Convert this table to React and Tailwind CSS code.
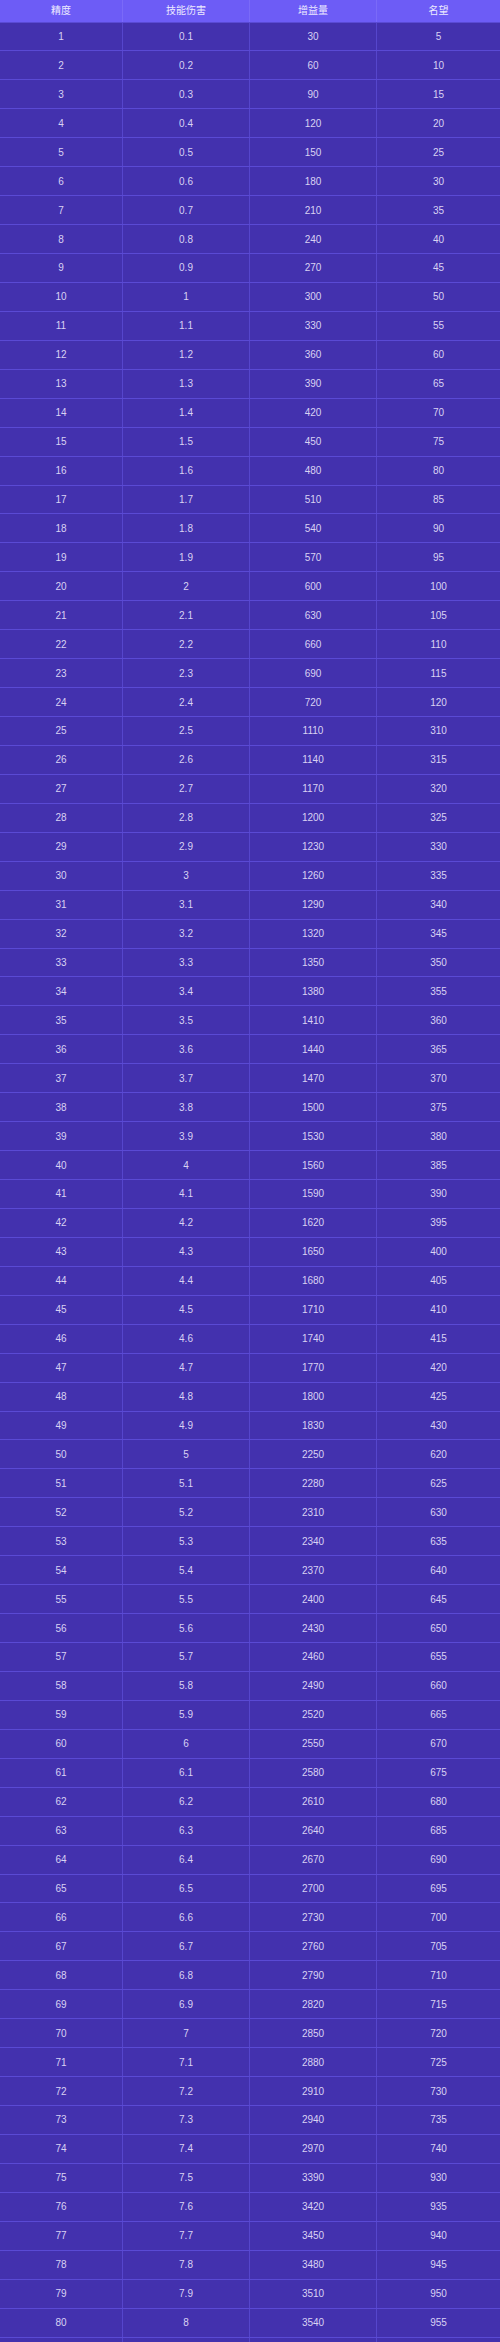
import React from "react";

const bonusGain = [0, 360, 750, 1140];

const rows = Array.from({ length: 81 }, (_, i) => {
  const n = i + 1;
  const tier = Math.floor(n / 25);
  return {
    level: n,
    damage: parseFloat((n / 10).toFixed(1)),
    gain: 30 * n + bonusGain[tier],
    fame: 5 * n + 185 * tier,
  };
});

const cols = "grid grid-cols-[123px_127px_127px_123px]";

const App = () => {
  return (
    <div
      className="w-[500px] h-[2342px] overflow-hidden bg-[#4331ae] text-[10px]"
      style={{ fontFamily: '"Liberation Sans", "Noto Sans CJK SC", sans-serif' }}
    >
      <div className={`${cols} h-[21.5px] bg-[#6d5cf6] text-[#eceaff]`}>
        {["精度", "技能伤害", "增益量", "名望"].map((h, i) => (
          <div
            key={h}
            className={`flex items-center justify-center ${i < 3 ? "border-r border-[#7a6af8]" : ""}`}
          >
            {h}
          </div>
        ))}
      </div>
      {rows.map((r) => (
        <div
          key={r.level}
          className={`${cols} h-[28.95px] border-t border-[#5a4ad4] text-[#d9d2f3]`}
        >
          {[r.level, r.damage, r.gain, r.fame].map((v, i) => (
            <div
              key={i}
              className={`flex items-center justify-center ${i < 3 ? "border-r border-[#5646cc]" : ""}`}
            >
              {v}
            </div>
          ))}
        </div>
      ))}
    </div>
  );
};

export default App;
